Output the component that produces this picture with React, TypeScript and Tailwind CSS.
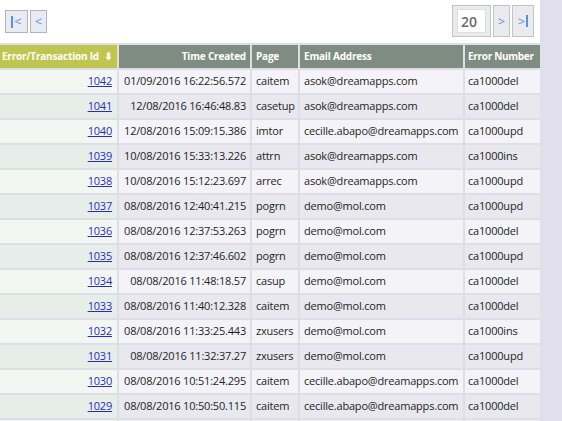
import React from "react";

const rows: [string, string, string, string, string][] = [
  ["1042", "01/09/2016 16:22:56.572", "caitem", "asok@dreamapps.com", "ca1000del"],
  ["1041", "12/08/2016 16:46:48.83", "casetup", "asok@dreamapps.com", "ca1000del"],
  ["1040", "12/08/2016 15:09:15.386", "imtor", "cecille.abapo@dreamapps.com", "ca1000upd"],
  ["1039", "10/08/2016 15:33:13.226", "attrn", "asok@dreamapps.com", "ca1000ins"],
  ["1038", "10/08/2016 15:12:23.697", "arrec", "asok@dreamapps.com", "ca1000upd"],
  ["1037", "08/08/2016 12:40:41.215", "pogrn", "demo@mol.com", "ca1000upd"],
  ["1036", "08/08/2016 12:37:53.263", "pogrn", "demo@mol.com", "ca1000del"],
  ["1035", "08/08/2016 12:37:46.602", "pogrn", "demo@mol.com", "ca1000upd"],
  ["1034", "08/08/2016 11:48:18.57", "casup", "demo@mol.com", "ca1000del"],
  ["1033", "08/08/2016 11:40:12.328", "caitem", "demo@mol.com", "ca1000del"],
  ["1032", "08/08/2016 11:33:25.443", "zxusers", "demo@mol.com", "ca1000ins"],
  ["1031", "08/08/2016 11:32:37.27", "zxusers", "demo@mol.com", "ca1000upd"],
  ["1030", "08/08/2016 10:51:24.295", "caitem", "cecille.abapo@dreamapps.com", "ca1000del"],
  ["1029", "08/08/2016 10:50:50.115", "caitem", "cecille.abapo@dreamapps.com", "ca1000del"],
];

function SortArrow() {
  return (
    <svg width="7" height="9" viewBox="0 0 7 9" className="ml-[6px] inline-block shrink-0">
      <path d="M2 0.5 H5 V5 H6.5 L3.5 8.5 L0.5 5 H2 Z" fill="#ffffff" stroke="#e8e0a0" strokeWidth="0.6" />
    </svg>
  );
}

export default function App() {
  return (
    <div
      className="flex h-[421px] w-[562px] overflow-hidden bg-[#e2dfec]"
      style={{ fontFamily: '"Open Sans", "DejaVu Sans", sans-serif' }}
    >
      <div className="flex w-[540px] shrink-0 flex-col overflow-hidden bg-white">
        {/* pager */}
        <div className="flex h-[43px] shrink-0 items-start justify-between">
          <div className="flex gap-[2px] pl-[5px] pt-[10px]">
            <button className="flex h-[23px] w-[23px] items-center justify-center border border-[#b4b4b4] bg-[#e8ecf2] text-[13px] leading-none text-[#5f8fe6]">
              <span className="mr-[1px] inline-block h-[12px] w-[2px] bg-[#5f8fe6]" />
              <span>&lt;</span>
            </button>
            <button className="flex h-[23px] w-[17px] items-center justify-center border border-[#b4b4b4] bg-[#e8ecf2] text-[13px] leading-none text-[#5f8fe6]">
              &lt;
            </button>
          </div>
          <div className="flex gap-[2px] pr-[6px] pt-[5px]">
            <div className="flex h-[32px] w-[39px] items-center justify-center border border-[#c4c4c4] bg-[#e9ebef]">
              <div className="flex h-[24px] w-[29px] items-center border border-[#dedede] bg-white pl-[3px] text-[14px] font-semibold text-[#6b6b6b]">
                20
              </div>
            </div>
            <button className="flex h-[32px] w-[17px] items-center justify-center border border-[#c4c4c4] bg-[#e9ebef] text-[13px] leading-none text-[#5f8fe6]">
              &gt;
            </button>
            <button className="flex h-[32px] w-[22px] items-center justify-center border border-[#c4c4c4] bg-[#e9ebef] text-[13px] leading-none text-[#5f8fe6]">
              <span>&gt;</span>
              <span className="ml-[1px] inline-block h-[12px] w-[2px] bg-[#5f8fe6]" />
            </button>
          </div>
        </div>

        {/* table */}
        <div className="grid shrink-0 grid-cols-[117px_131px_46px_163px_75px] gap-x-[2px] gap-y-[2px] bg-[#dfdde8] pt-[2px] text-[11px] tracking-[-0.2px] text-[#1e1e1e]">
          <div className="flex h-[23px] items-center justify-end whitespace-nowrap bg-[#bec64f] pr-[5px] text-[10px] font-bold tracking-[-0.2px] text-white">
            Error/Transaction Id
            <SortArrow />
          </div>
          <div className="flex h-[23px] items-center justify-end whitespace-nowrap bg-[#7f8c82] pr-[4px] text-[10px] font-bold tracking-[-0.2px] text-white">
            Time Created
          </div>
          <div className="flex h-[23px] items-center whitespace-nowrap bg-[#7f8c82] pl-[4px] text-[10px] font-bold tracking-[-0.2px] text-white">
            Page
          </div>
          <div className="flex h-[23px] items-center whitespace-nowrap bg-[#7f8c82] pl-[4px] text-[10px] font-bold tracking-[-0.2px] text-white">
            Email Address
          </div>
          <div className="flex h-[23px] items-center whitespace-nowrap bg-[#7f8c82] pl-[3px] text-[10px] font-bold tracking-[-0.3px] text-white">
            Error Number
          </div>
          {rows.map((r, i) => {
            const odd = i % 2 === 0;
            const first = odd ? "bg-[#f2f7f2]" : "bg-[#e7ede8]";
            const rest = odd ? "bg-[#f4f4f8]" : "bg-[#e8e8ee]";
            return (
              <React.Fragment key={r[0]}>
                <div className={`flex h-[23px] items-center justify-end pr-[5px] ${first}`}>
                  <a href="#" className="text-[#2a2ac8] underline">
                    {r[0]}
                  </a>
                </div>
                <div className={`flex h-[23px] items-center justify-end whitespace-nowrap pr-[4px] ${rest}`}>{r[1]}</div>
                <div className={`flex h-[23px] items-center whitespace-nowrap pl-[4px] ${rest}`}>{r[2]}</div>
                <div className={`flex h-[23px] items-center whitespace-nowrap pl-[4px] ${rest}`}>{r[3]}</div>
                <div className={`flex h-[23px] items-center whitespace-nowrap pl-[3px] ${rest}`}>{r[4]}</div>
              </React.Fragment>
            );
          })}
          <div className="h-[23px] bg-[#f2f7f2]" />
          <div className="h-[23px] bg-[#f4f4f8]" />
          <div className="h-[23px] bg-[#f4f4f8]" />
          <div className="h-[23px] bg-[#f4f4f8]" />
          <div className="h-[23px] bg-[#f4f4f8]" />
        </div>
      </div>
    </div>
  );
}
